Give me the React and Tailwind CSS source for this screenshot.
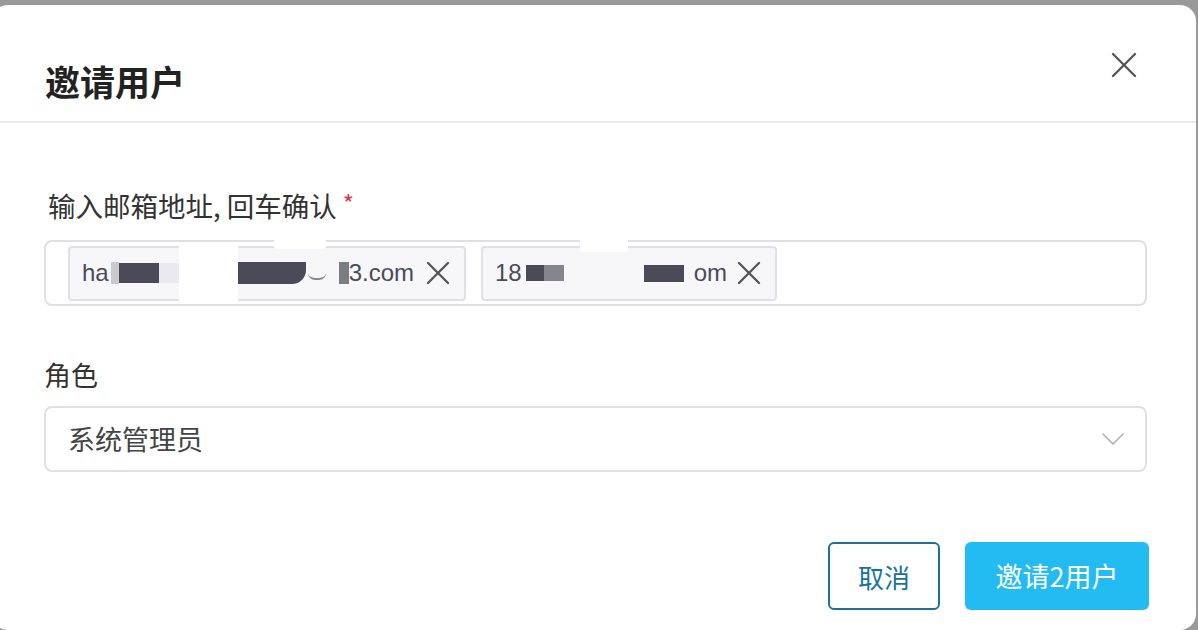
import { X, ChevronDown } from "lucide-react";

const FONT = { fontFamily: '"Noto Sans CJK SC", "Noto Sans", sans-serif' };
const LATIN = { fontFamily: '"Liberation Sans", "Noto Sans CJK SC", sans-serif' };

function Tag({ children, width }) {
  return (
    <div
      className="flex h-[55px] shrink-0 items-center rounded-[4px] border-2 border-[#e1e0e8] bg-[#f7f7f9] pl-[12px] pr-[6px] text-[24px] text-[#4a4a58]"
      style={{ ...LATIN, width }}
    >
      <div className="flex flex-1 items-center">{children}</div>
      <X size={40} strokeWidth={1.4} className="shrink-0 text-[#555]" />
    </div>
  );
}

export default function App() {
  return (
    <div className="h-[630px] w-[1198px] overflow-hidden bg-[#999999] pt-[5px]" style={FONT}>
      <div className="ml-[-8px] flex h-[625px] w-[1204px] flex-col rounded-[16px] bg-white">
        <header className="flex h-[118px] items-start justify-between border-b-2 border-[#eae8f2] pl-[53px] pr-[50px]">
          <h1 className="mt-[55px] text-[35px] font-bold leading-[42px] text-[#222]">邀请用户</h1>
          <button className="mt-[38px] text-[#555]">
            <X size={44} strokeWidth={1.3} />
          </button>
        </header>

        <div className="flex flex-1 flex-col pl-[52px] pr-[47px]">
          <label className="mt-[64px] flex h-[36px] items-center pl-[4px] text-[27.5px] leading-[36px] text-[#333]">
            输入邮箱地址, 回车确认
            <span className="ml-[6px] mt-[-4px] text-[24px] leading-none text-[#e0304a]">*</span>
          </label>

          <div className="relative mt-[17px] mr-[2px] flex h-[66px] items-center gap-[15px] rounded-[8px] border-2 border-[#e0dfe8] pl-[22px]">
            <Tag width={398}>
              <span>ha</span>
              <span className="ml-[2px] h-[22px] w-[8px] bg-[#c9c9cf]" />
              <span className="h-[20px] w-[40px] bg-[#4a4a58]" />
              <span className="h-[20px] w-[20px] bg-[#e9e9ee]" />
              <span className="h-[55px] w-[59px] bg-white" />
              <span className="h-[22px] w-[68px] rounded-br-[14px] bg-[#4a4a58]" />
              <span className="ml-[2px] h-[14px] w-[18px] rounded-full border-b-2 border-[#888]" />
              <span className="ml-[13px] h-[22px] w-[10px] bg-[#7c7c84]" />
              <span>3.com</span>
            </Tag>
            <Tag width={296}>
              <span>18</span>
              <span className="ml-[4px] h-[16px] w-[18px] bg-[#4a4a58]" />
              <span className="h-[16px] w-[20px] bg-[#85858d]" />
              <span className="w-[80px]" />
              <span className="h-[17px] w-[40px] bg-[#4a4a58]" />
              <span className="ml-[10px]">om</span>
            </Tag>
            <span className="absolute left-[227px] top-[-3px] h-[10px] w-[54px] rounded-full bg-white" />
            <span className="absolute left-[534px] top-[-3px] h-[13px] w-[48px] bg-white" />
          </div>

          <label className="mt-[51px] h-[36px] text-[27px] leading-[36px] text-[#333]">角色</label>

          <div className="mt-[13px] mr-[2px] flex h-[66px] items-center justify-between rounded-[8px] border-2 border-[#e0dfe8] pl-[22px] pr-[12px]">
            <span className="text-[27px] text-[#444]">系统管理员</span>
            <ChevronDown size={40} strokeWidth={0.95} className="text-[#aeadb8]" />
          </div>

          <div className="mt-[70px] flex justify-end gap-[25px]">
            <button className="h-[68px] w-[112px] rounded-[6px] border-2 border-[#17739a] text-[26px] text-[#17739a]">
              取消
            </button>
            <button className="flex h-[68px] w-[184px] items-center justify-center rounded-[6px] bg-[#22bcf2] text-[27px] text-white">
              邀请2用户
            </button>
          </div>
        </div>
      </div>
    </div>
  );
}
